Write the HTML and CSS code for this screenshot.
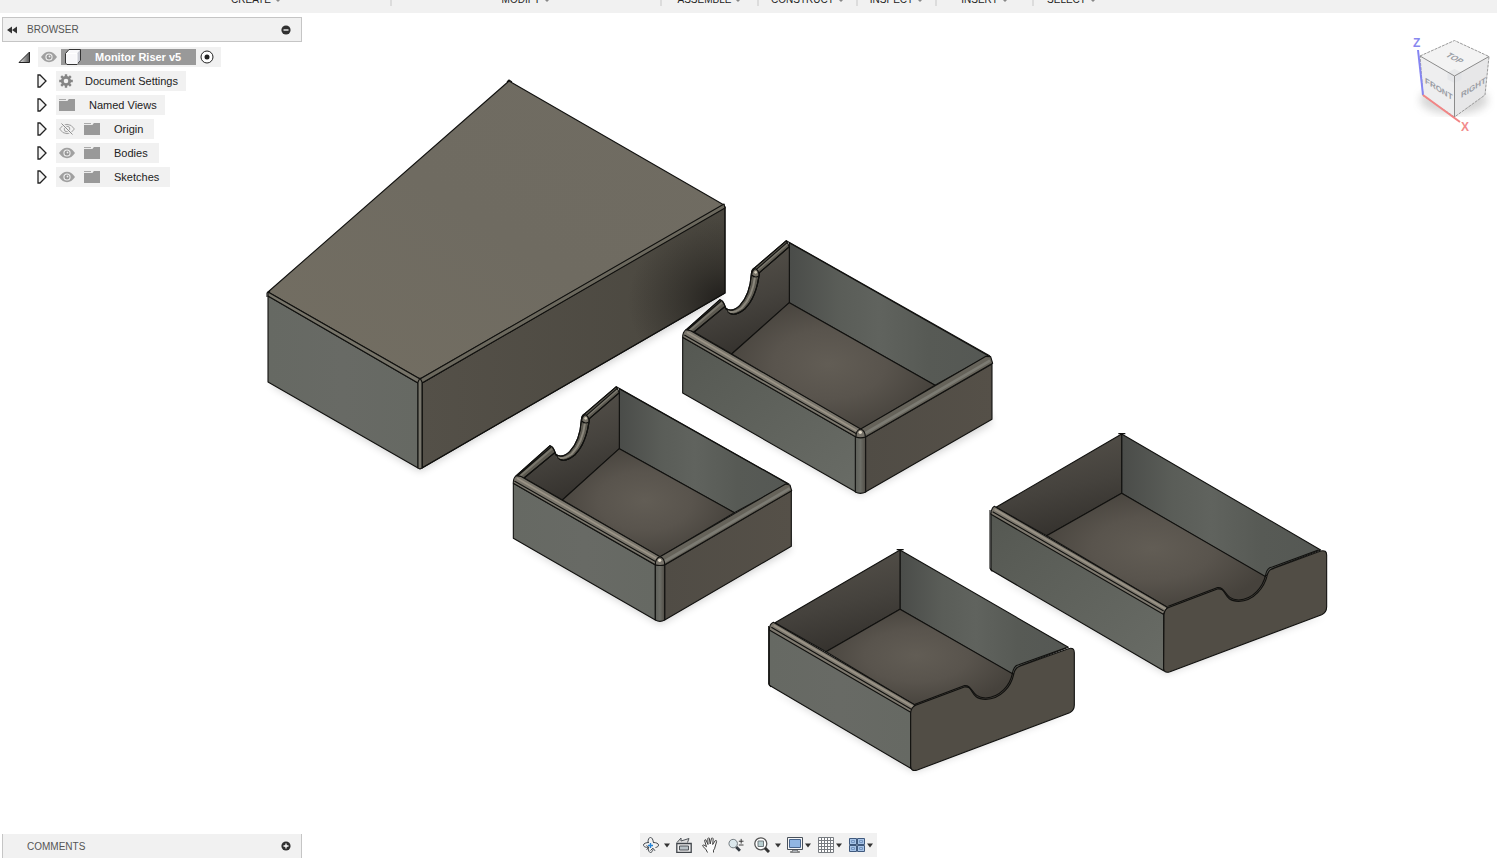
FILE: index.html
```html
<!DOCTYPE html>
<html lang="en">
<head>
  <meta charset="UTF-8" />
  <meta name="viewport" content="width=device-width, initial-scale=1.0"/>
  <title>Monitor Riser v5</title>
  <link rel="stylesheet" href="styles.css">
</head>
<body>

  <!-- Shared icons -->
  <svg class="sprite" aria-hidden="true">
    <symbol id="eye" viewBox="0 0 16 12">
      <path d="M0 6Q3.500 .8 8 .8T16 6Q12.500 11.200 8 11.200T0 6z" fill="#a0a0a0"/>
      <circle cx="8" cy="6" r="3.600" fill="#f1f1f1"/>
      <circle cx="8" cy="6" r="2.500" fill="#969696"/>
      <circle cx="8.500" cy="5.500" r=".9" fill="#f1f1f1"/>
    </symbol>
    <symbol id="eye-off" viewBox="0 0 16 12">
      <path d="M.6 6Q3.500 1.300 8 1.300T15.400 6Q12.500 10.700 8 10.700T.6 6z" fill="none" stroke="#a0a0a0"/>
      <circle cx="8" cy="6" r="2.800" fill="none" stroke="#a0a0a0"/>
      <path d="M2.500 0l11 12" stroke="#f1f1f1" stroke-width="2.500"/>
      <path d="M2.500 .5l11 11" stroke="#8d8d8d"/>
    </symbol>
    <symbol id="folder" viewBox="0 0 16 14">
      <path d="M0 1h7v1H0z" fill="#aaa"/>
      <path d="M0 3h8l2-2h6v12H0z" fill="#999"/>
      <path d="M0 2.500h8.500" stroke="#ececec"/>
    </symbol>
    <symbol id="arrow" viewBox="0 0 10 14">
      <path d="M1 1h2l6 6-6 6H1z" fill="#f4f4f4" stroke="#222" stroke-width="1.300"/>
    </symbol>
    <symbol id="caret" viewBox="0 0 6 5">
      <path d="M0 .5h6L3 4.500z" fill="#333"/>
    </symbol>
  </svg>

  <main class="app">

    <!-- Model -->
    <svg class="model" viewBox="0 0 1497 858" preserveAspectRatio="xMidYMid slice" role="img" aria-label="Monitor riser with four drawers">
      <defs>
        <linearGradient id="top" x1="0" y1="1" x2="1" y2="0">
          <stop offset="0" stop-color="#736e62"/><stop offset=".5" stop-color="#6f6b61"/><stop offset="1" stop-color="#706c62"/>
        </linearGradient>
        <linearGradient id="side" x1="0" y1="0" x2="1" y2="0">
          <stop offset="0" stop-color="#666963"/><stop offset=".5" stop-color="#686a65"/><stop offset="1" stop-color="#666963"/>
        </linearGradient>
        <linearGradient id="left" x1="0" y1="0" x2="1" y2="1">
          <stop offset="0" stop-color="#555852"/><stop offset="1" stop-color="#696c66"/>
        </linearGradient>
        <linearGradient id="right" x1="0" y1="0" x2="1" y2="0">
          <stop offset="0" stop-color="#504c45"/><stop offset="1" stop-color="#555048"/>
        </linearGradient>
        <linearGradient id="long" x1="0" y1="0" x2="1" y2="0">
          <stop offset="0" stop-color="#545048"/><stop offset="1" stop-color="#4a473f"/>
        </linearGradient>
        <radialGradient id="dark" cx="1" cy=".36" r=".32">
          <stop offset="0" stop-color="#1b1917" stop-opacity=".9"/><stop offset=".4" stop-color="#1f1d1a" stop-opacity=".5"/><stop offset="1" stop-color="#25221f" stop-opacity="0"/>
        </radialGradient>
        <linearGradient id="wall" x1="0" y1="0" x2="1" y2="0">
          <stop offset="0" stop-color="#4a4c49"/><stop offset=".25" stop-color="#5a5d58"/><stop offset=".45" stop-color="#60635e"/><stop offset=".7" stop-color="#575a55"/><stop offset="1" stop-color="#555854"/>
        </linearGradient>
        <linearGradient id="inner" x1=".3" y1="0" x2=".6" y2="1">
          <stop offset="0" stop-color="#56524b"/><stop offset=".55" stop-color="#45423d"/><stop offset="1" stop-color="#33302c"/>
        </linearGradient>
        <radialGradient id="floor" cx=".48" cy=".48" r=".55">
          <stop offset="0" stop-color="#625d55"/><stop offset=".5" stop-color="#59544d"/><stop offset="1" stop-color="#46423c"/>
        </radialGradient>
        <linearGradient id="post" x1="0" y1="0" x2="1" y2="0">
          <stop offset="0" stop-color="#5c5e58"/><stop offset=".5" stop-color="#6c6d66"/><stop offset="1" stop-color="#504c45"/>
        </linearGradient>
        <filter id="soft" x="-10%" y="-10%" width="120%" height="120%"><feGaussianBlur stdDeviation="4"/></filter>
        <!-- finger notch of the slanted drawers -->
        <g id="notch">
          <path d="M48 300L150 209Q162 212 166 234Q184 250 209 227Q240 195 244 132Q245 119 252 115L349 32L358 50L268 128C264 165 256 205 224 237Q180 272 165 229L72 306z" fill="#5c5950"/>
          <path d="M57 303L156 218M258 123L352 42" stroke="#79766c" stroke-width="6"/>
          <path d="M170 240Q184 255 215 234Q248 200 255 140" stroke="#8b877c" stroke-width="6"/>
          <path d="M48 300L150 209Q162 212 166 234Q184 250 209 227Q240 195 244 132Q245 119 252 115L349 32M52 300L153 213M256 121L352 37M72 306L165 229Q180 272 224 237C256 205 264 165 268 128L358 50"/>
          <path d="M245 135Q247 118 257 116Q267 121 267 137Q256 146 245 135z" fill="#777368"/>
          <circle cx="257" cy="127" r="4" fill="#d2cbb9" stroke="none"/>
        </g>
      </defs>

      <g class="shadow" filter="url(#soft)">
        <path d="M272 385L420 471L722 298L700 280L420 440L280 370z"/>
        <path d="M686 395L860 495L992 423L980 400L860 465z"/>
        <path d="M516 541L660 624L791 549L780 525L660 590z"/>
        <path d="M994 573L1166 673L1325 614L1166 640z"/>
        <path d="M772 688L914 771L1072 711L914 740z"/>
      </g>

      <!-- Riser -->
      <g class="edges">
        <path d="M509 81L724 205L420 379L268 292z" fill="url(#top)"/>
        <path d="M268 296L418 383V468L268 382z" fill="url(#side)"/>
        <path d="M422 383L725 207V293L422 468z" fill="url(#long)"/>
        <path d="M422 383L725 207V293L422 468z" fill="url(#dark)"/>
        <path d="M268 292L420 379L418 383L268 296z" fill="#777469"/>
        <path d="M420 379L724 204L725 208L422 383z" fill="#6b685d"/>
        <path d="M418 382L420 378L422 382V468L420 469L418 468z" fill="#77756b"/>
        <path d="M507 82L509 80L512 82M267 297V293L270 291"/>
      </g>

      <!-- Back drawer -->
      <g class="drawer" transform="translate(670 230) scale(.33333)">
        <path d="M358 38L955 377L795 466L358 218z" fill="url(#wall)"/>
        <path d="M72 306L165 229Q180 272 224 237C256 205 264 165 268 128L358 50V218L185 372z" fill="url(#inner)"/>
        <path d="M358 218L795 466L572 600L185 372z" fill="url(#floor)"/>
        <use href="#notch"/>
        <path d="M38 322L558 621V786L38 489z" fill="url(#left)"/>
        <path d="M586 621L966 402V568L586 786z" fill="url(#right)"/>
        <path d="M48 299L62 302L572 597L558 621L38 322Q38 306 48 299z" fill="#7b776d"/>
        <path class="shine" d="M51 307L565 605"/>
        <path d="M43 315L562 613"/>
        <path d="M572 597L948 379L962 380L968 400L586 621z" fill="#66635a"/>
        <path class="gloss" d="M582 612L960 392"/>
        <path d="M556 621H587V786Q571 794 556 786z" fill="url(#post)"/>
        <path d="M558 621Q557 600 572 597Q586 602 586 621Q572 626 558 621z" fill="#77736a"/>
        <circle cx="571" cy="607" r="5" fill="#ddd5c4" stroke="none"/>
        <path d="M349 32L960 378"/>
      </g>

      <!-- Middle drawer -->
      <g class="drawer" transform="translate(500 375) scale(.33333)">
        <path d="M358 41L863 326L703 413L358 221z" fill="url(#wall)"/>
        <path d="M72 309L165 232Q180 275 224 240C256 208 264 168 268 131L358 53V221L187 375z" fill="url(#inner)"/>
        <path d="M358 221L703 413L480 546L187 375z" fill="url(#floor)"/>
        <use href="#notch" y="3"/>
        <path d="M40 325L466 570V735L40 490z" fill="url(#side)"/>
        <path d="M494 570L874 347V514L494 735z" fill="url(#right)"/>
        <path d="M49 302L62 304L480 545L466 569L40 325Q39 309 49 302z" fill="#7b776d"/>
        <path class="shine" d="M51 310L472 552"/>
        <path d="M43 318L469 561"/>
        <path d="M480 545L857 327L870 330L875 347L494 569z" fill="#66635a"/>
        <path class="gloss" d="M490 561L869 340"/>
        <path d="M466 570H494V735Q480 743 466 735z" fill="url(#post)"/>
        <path d="M466 569Q466 549 480 545Q494 549 494 569Q480 574 466 569z" fill="#77736a"/>
        <circle cx="479" cy="556" r="5" fill="#ddd5c4" stroke="none"/>
        <path d="M349 35L868 328"/>
      </g>

      <!-- Right drawer -->
      <g class="drawer" transform="translate(980 425) scale(.33333)">
        <path d="M425 27L1022 375L880 430L855 456L425 205z" fill="url(#wall)"/>
        <path d="M425 27V205L200 332L48 247z" fill="url(#inner)"/>
        <path d="M425 205L860 457L850 530L565 549L200 332z" fill="url(#floor)"/>
        <path d="M33 264L551 565V737L33 435z" fill="url(#left)"/>
        <path d="M43 244L562 547L550 568L33 268Q33 250 43 244z" fill="#7d786e"/>
        <path class="shine" d="M44 253L557 552"/>
        <path d="M38 260L551 558"/>
        <path d="M552 570Q553 552 568 547L712 492C742 487 727 529 776 529C822 529 854 486 862 450Q866 432 882 430L1022 378Q1040 374 1040 390V545Q1040 562 1025 569L570 740Q551 746 551 730z" fill="#514d45"/>
        <path d="M565 544L711 488C740 484 731 524 776 525C820 522 849 486 857 449Q861 428 877 426L1015 375M415 26H436M30 255V430L37 439"/>
      </g>

      <!-- Front drawer -->
      <g class="drawer" transform="translate(755 540) scale(.33333)">
        <path d="M435 30L940 322L795 378L775 404L435 208z" fill="url(#wall)"/>
        <path d="M435 30V208L213 335L60 248z" fill="url(#inner)"/>
        <path d="M435 208L778 404L760 480L480 496L213 335z" fill="url(#floor)"/>
        <path d="M43 267L467 514V685L43 436z" fill="url(#side)"/>
        <path d="M55 247L480 495L467 517L43 270Q43 252 55 247z" fill="#7d786e"/>
        <path class="shine" d="M56 256L475 501"/>
        <path d="M49 262L469 508"/>
        <path d="M467 520Q468 502 482 496L628 441C658 436 642 478 692 478C738 478 769 438 776 403Q780 382 796 378L940 326Q958 321 958 338V495Q958 511 944 518L487 690Q467 696 467 678z" fill="#514d45"/>
        <path d="M480 493L627 437C655 433 647 473 692 474C735 472 765 436 772 401Q776 377 791 374L933 323M425 29H446M41 258V432L48 441"/>
      </g>
    </svg>

    <!-- Ribbon -->
    <nav class="ribbon" aria-label="Ribbon">
      <button>CREATE <i></i></button>
      <button>MODIFY <i></i></button>
      <button>ASSEMBLE <i></i></button>
      <button>CONSTRUCT <i></i></button>
      <button>INSPECT <i></i></button>
      <button>INSERT <i></i></button>
      <button>SELECT <i></i></button>
    </nav>

    <!-- Browser panel -->
    <aside class="browser">
      <header class="panel-head">
        <button class="collapse" aria-label="Collapse">
          <svg width="10" height="8" viewBox="0 0 10 8"><path d="M5 .5v7L0 4zM10 .5v7L5 4z" fill="#333"/></svg>
        </button>
        <span>BROWSER</span>
        <button class="toggle" aria-label="Hide panel">
          <svg width="10" height="10" viewBox="0 0 10 10"><circle cx="5" cy="5" r="4.600" fill="#303030"/><path d="M2.500 5h5" stroke="#fff" stroke-width="1.300"/></svg>
        </button>
      </header>

      <ul class="tree">
        <li class="root">
          <svg width="12" height="12" viewBox="0 0 12 12"><defs><linearGradient id="tri"><stop offset="0" stop-color="#eee"/><stop offset="1" stop-color="#555"/></linearGradient></defs><path d="M1 11.500h10.500V1z" fill="url(#tri)" stroke="#222"/></svg>
          <div class="node">
            <svg width="16" height="12"><use href="#eye"/></svg>
            <span class="selected">
              <svg width="18" height="18" viewBox="0 0 18 18"><path d="M1.500 5.500L5 1.500h11.500v10.500L13 16.500H3L1.500 15z" fill="#f8f8fa" stroke="#333"/><path d="M13 5.500l3-3.500v10l-3 4z" fill="#c9cbd3"/><path d="M2 5.500h11V16" fill="none" stroke="#fff"/></svg>
              Monitor Riser v5
            </span>
            <svg width="14" height="14" viewBox="0 0 14 14"><circle cx="7" cy="7" r="6" fill="#fff" stroke="#222"/><circle cx="7" cy="7" r="2.500" fill="#222"/></svg>
          </div>
        </li>
        <li>
          <svg width="10" height="14"><use href="#arrow"/></svg>
          <div class="node settings">
            <svg width="14" height="14" viewBox="0 0 14 14"><circle cx="7" cy="7" r="3.700" fill="none" stroke="#858585" stroke-width="2.800"/><path d="M7 .2v3M7 10.800v3M.2 7h3M10.800 7h3M2.200 2.200l2 2M9.800 9.800l2 2M2.200 11.800l2-2M9.800 4.200l2-2" stroke="#858585" stroke-width="2.400"/></svg>
            Document Settings
          </div>
        </li>
        <li>
          <svg width="10" height="14"><use href="#arrow"/></svg>
          <div class="node views"><svg width="16" height="14"><use href="#folder"/></svg>Named Views</div>
        </li>
        <li>
          <svg width="10" height="14"><use href="#arrow"/></svg>
          <div class="node"><svg width="16" height="12"><use href="#eye-off"/></svg><svg class="folder" width="16" height="14"><use href="#folder"/></svg>Origin</div>
        </li>
        <li>
          <svg width="10" height="14"><use href="#arrow"/></svg>
          <div class="node"><svg width="16" height="12"><use href="#eye"/></svg><svg class="folder" width="16" height="14"><use href="#folder"/></svg>Bodies</div>
        </li>
        <li>
          <svg width="10" height="14"><use href="#arrow"/></svg>
          <div class="node"><svg width="16" height="12"><use href="#eye"/></svg><svg class="folder" width="16" height="14"><use href="#folder"/></svg>Sketches</div>
        </li>
      </ul>
    </aside>

    <!-- View cube -->
    <svg class="viewcube" width="107" height="120" viewBox="0 0 107 120" role="img" aria-label="View cube">
      <ellipse cx="64" cy="80" rx="34" ry="14" fill="#888" opacity=".35" filter="url(#soft)"/>
      <path d="M64.500 20.500L99 36.500 64.500 56 30 36z" fill="#f3f3f3"/>
      <path d="M30 36l34.500 20v41L33 75.500z" fill="#eeeeef"/>
      <path d="M99 36.500L64.500 56v41L95 75z" fill="#e7e7e8"/>
      <path d="M64.500 49l7 3.500v7L64.500 63l-7-3.500v-7z" fill="#dfe1e5" opacity=".6"/>
      <path d="M30 36l34.500-15.500L99 36.500 95 75 64.500 97 33 75.500z" fill="none" stroke="#999" stroke-dasharray="3 1"/>
      <path d="M30 36l34.500 20L99 36.500M64.500 56v41" fill="none" stroke="#8b8b8b"/>
      <path d="M28 30l5 45" stroke="#8585f2" stroke-width="2"/>
      <path d="M33 75l37 27" stroke="#f28585" stroke-width="2"/>
      <text class="axis" x="23" y="27" fill="#8888ef">Z</text>
      <text class="axis" x="71" y="111" fill="#f28b8b">X</text>
      <text class="face" transform="translate(55 36) rotate(28) skewX(-28)">TOP</text>
      <text class="face" transform="translate(35 63) skewY(32)">FRONT</text>
      <text class="face" transform="translate(71 78) skewY(-32)">RIGHT</text>
    </svg>

    <!-- Comments panel -->
    <section class="comments">
      <span>COMMENTS</span>
      <button class="toggle" aria-label="Show comments">
        <svg width="10" height="10" viewBox="0 0 10 10"><circle cx="5" cy="5" r="4.600" fill="#303030"/><path d="M2.500 5h5M5 2.500v5" stroke="#fff" stroke-width="1.300"/></svg>
      </button>
    </section>

    <!-- Navigation bar -->
    <nav class="navbar" aria-label="Navigation">
      <button class="drop wide" aria-label="Orbit">
        <svg width="16" height="16" viewBox="0 0 16 16" fill="none" stroke="#454a50"><path d="M6 10.500C2 10.500.5 9.500.5 8S3 5.500 6 5.500M10 5.500c3.500 0 5.500 1 5.500 2.500s-1 2-3 2.500M5 5.500C5 2 6 .5 7.500.5S10 2.500 10.300 5M5 11c.5 3 1.300 4.500 2.500 4.500s2-1.200 2.500-3M3.500 8.500l2.500 2-2.500 2M7.500 13.500l2.500-2.300 2 2.600"/><path d="M7.500 6v5M5 8.500h5" stroke="#2584d8" stroke-width="1.400"/></svg>
        <svg width="6" height="5"><use href="#caret"/></svg>
      </button>
      <button aria-label="Look at">
        <svg width="16" height="16" viewBox="0 0 16 16"><path d="M1 5.500L5 1v3l8-2.500-1.500 4" fill="#ddd" stroke="#50555a"/><path d="M.8 6.500h14.400v9H.8z" fill="#eee" stroke="#41464b" stroke-width="1.300"/><path d="M3.500 9h9v4h-9z" fill="#b9c2c7" stroke="#50555a"/></svg>
      </button>
      <button aria-label="Pan">
        <svg width="16" height="16" viewBox="0 0 16 16"><path d="M5.500 15.500Q4.500 12 1 9.500Q0 8 1.600 8Q3 8.300 4.500 9.800L2.700 4Q2.500 2.500 3.800 2.700L6 7.500 5.800 1.600Q6.200.4 7.300 1.200L8.200 7 9.500 1.300Q10.600.3 11.200 1.800L10.700 7.500 13.200 3.700Q14.700 3 14.600 4.600L13 10Q12.800 12 11.500 13.200V15.500" fill="#fcfcfc" stroke="#404040"/></svg>
      </button>
      <button aria-label="Zoom">
        <svg width="16" height="16" viewBox="0 0 17 16"><circle cx="5.500" cy="6.500" r="4.500" fill="#dce8ed" stroke="#6e757a"/><path d="M8.700 10l4 4" stroke="#353b42" stroke-width="3"/><path d="M11.500 4h5M14 1.500v5M11.500 8h5" stroke="#333"/></svg>
      </button>
      <button class="drop wide" aria-label="Fit">
        <svg width="16" height="16" viewBox="0 0 16 16"><circle cx="6.800" cy="6.800" r="6" fill="#fff" stroke="#555" stroke-width="1.300"/><path d="M4 4h5.500v5.500H4z" fill="#b9cfd1" stroke="#71797c"/><path d="M11 11l4 4" stroke="#333" stroke-width="3"/></svg>
        <svg width="6" height="5"><use href="#caret"/></svg>
      </button>
      <button class="drop" aria-label="Display settings">
        <svg width="16" height="16" viewBox="0 0 16 16"><path d="M.5.5h15v12H.5z" fill="#f6f6f6" stroke="#49515b"/><path d="M2.500 2.500h11v8h-11z" fill="#91b6e3" stroke="#48658d"/><path d="M5.500 13h5v1.500h2v1h-9v-1h2z" fill="#aeb3b8" stroke="#555" stroke-width=".6"/></svg>
        <svg width="6" height="5"><use href="#caret"/></svg>
      </button>
      <button class="drop" aria-label="Grid and snaps">
        <svg width="16" height="16" viewBox="0 0 16 16"><path d="M.5.5h15v15H.5z" fill="#fff"/><path d="M.5.5h15v15H.5zM3.500 0v16M6.500 0v16M9.500 0v16M12.500 0v16M0 3.500h16M0 6.500h16M0 9.500h16M0 12.500h16" fill="none" stroke="#777b80"/></svg>
        <svg width="6" height="5"><use href="#caret"/></svg>
      </button>
      <button class="drop" aria-label="Viewports">
        <svg width="16" height="16" viewBox="0 0 16 16"><path d="M.5 1.500h7v6h-7zM8.500 1.500h7v6h-7zM.5 8.500h7v6h-7zM8.500 8.500h7v6h-7z" fill="#a9c5e8" stroke="#405a7e"/><path d="M2.500 3.500h3v2h-3zM10.500 3.500h3v2h-3zM2.500 10.500h3v2h-3zM10.500 10.500h3v2h-3z" fill="none" stroke="#7596c2"/></svg>
        <svg width="6" height="5"><use href="#caret"/></svg>
      </button>
    </nav>

  </main>
</body>
</html>
```

FILE: styles.css
```css
/* Base & Layout */
* {
  box-sizing: border-box;
}
body {
  margin: 0;
  font-family: "Liberation Sans", Arial, sans-serif;
  font-size: 11px;
  color: #222;
  background: #fff;
}
button {
  padding: 0;
  border: none;
  background: none;
  font: inherit;
  color: inherit;
  cursor: pointer;
}
svg {
  display: block;
  flex: none;
}
.sprite {
  position: absolute;
  width: 0;
  height: 0;
}
.app {
  position: relative;
  height: 100vh;
  overflow: hidden;
}

/* Model */
.model {
  position: absolute;
  inset: 0;
  width: 100%;
  height: 100%;
}
.shadow {
  fill: #000;
  opacity: 0.2;
}
.edges,
.drawer {
  fill: none;
  stroke: #11110f;
  stroke-linejoin: round;
}
.edges {
  stroke-width: 1.1;
}
.drawer {
  stroke-width: 3.3;
}
.drawer .shine {
  stroke: #9a9386;
  stroke-width: 5;
}
.drawer .gloss {
  stroke: #7c7b73;
  stroke-width: 8;
}

/* Ribbon */
.ribbon {
  position: relative;
  display: flex;
  align-items: flex-end;
  height: 13px;
  padding: 0 0 7px 122px;
  background: #f1f1f1;
  overflow: hidden;
}
.ribbon button {
  display: flex;
  flex: none;
  align-items: center;
  justify-content: center;
  gap: 4px;
  width: 97px;
  height: 12px;
  border-right: 2px solid #dcdcdc;
  font-size: 10px;
  line-height: 12px;
}
.ribbon button:nth-child(-n+2) {
  width: 270px;
}
.ribbon button:nth-child(4) {
  width: 99px;
}
.ribbon button:nth-child(5) {
  width: 79px;
}
.ribbon button:last-child {
  width: 75px;
  border-right: none;
}
.ribbon i {
  border: 3px solid transparent;
  border-top-color: #888;
  border-bottom: none;
}

/* Panels */
.browser {
  position: relative;
  width: 300px;
  margin: 4px 0 0 2px;
}
.panel-head,
.comments {
  display: flex;
  align-items: center;
  height: 25px;
  border: 1px solid #c5c5c5;
  background: #f1f1f1;
  font-size: 10px;
  color: #555;
}
.panel-head {
  padding: 0 10px 0 4px;
  gap: 10px;
}
.toggle {
  margin-left: auto;
}
.comments {
  position: absolute;
  left: 2px;
  bottom: 0;
  width: 300px;
  height: 24px;
  padding: 0 10px 0 24px;
  border-width: 0 1px;
}

/* Tree */
.tree {
  margin: 3px 0 0;
  padding: 0;
  list-style: none;
}
.tree li {
  display: flex;
  align-items: center;
  gap: 9px;
  height: 24px;
  padding-left: 35px;
}
.tree .root {
  gap: 8px;
  padding-left: 16px;
}
.node {
  display: flex;
  align-items: center;
  height: 20px;
  padding: 0 11px 0 3px;
  background: #f1f1f1;
  white-space: nowrap;
}
.root .node {
  gap: 4px;
  padding: 0 7px 0 3px;
}
.settings {
  gap: 12px;
  padding-right: 8px;
}
.views {
  gap: 14px;
  padding-right: 8px;
}
.node .folder {
  margin: 0 14px 0 9px;
}
.selected {
  display: flex;
  align-items: center;
  gap: 13px;
  width: 135px;
  height: 16px;
  padding-left: 3px;
  background: #999;
  color: #fff;
  font-weight: bold;
}

/* View cube */
.viewcube {
  position: absolute;
  top: 20px;
  right: 0;
}
.axis {
  font-size: 12px;
  font-weight: bold;
}
.face {
  font-size: 8px;
  font-weight: bold;
  fill: #999ca3;
}

/* Navigation bar */
.navbar {
  position: absolute;
  left: 50%;
  bottom: 1px;
  display: flex;
  height: 24px;
  margin-left: -109px;
  background: #f1f1f1;
}
.navbar button {
  display: flex;
  align-items: center;
  padding: 0 7px 0 3px;
}
.navbar .drop {
  gap: 2px;
  padding-right: 4px;
}
.navbar .wide {
  gap: 5px;
  padding-right: 3px;
}
```
